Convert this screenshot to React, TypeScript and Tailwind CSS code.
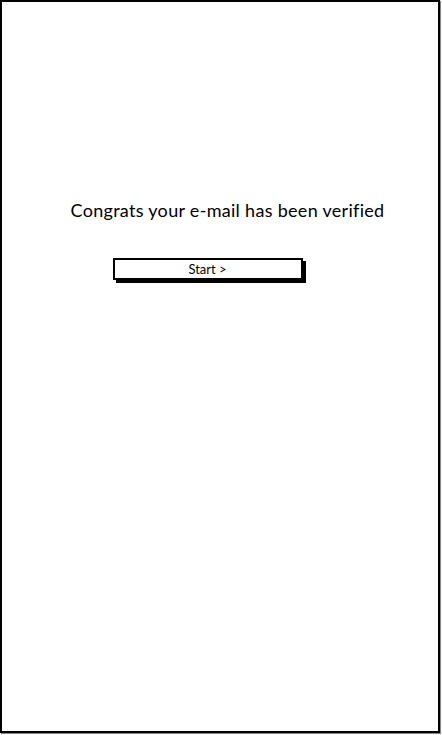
export default function App() {
  return (
    <div className="w-[442px] h-[735px] bg-white" style={{ fontFamily: '"Lato", "Liberation Sans", sans-serif' }}>
      <div className="w-[440px] h-[733px] border-2 border-black shadow-[1px_1px_0_#888] flex flex-col items-center">
        <div className="mt-[197px] ml-[15px] text-[18px] leading-[22px] text-black tracking-[0.3px]">
          Congrats your e-mail has been verified
        </div>
        <button className="mt-[37px] mr-[25px] w-[190px] h-[22px] border-2 border-black bg-white shadow-[3px_3px_0_#000] text-[13px] leading-none text-black flex items-center justify-center">
          Start &gt;
        </button>
      </div>
    </div>
  );
}
